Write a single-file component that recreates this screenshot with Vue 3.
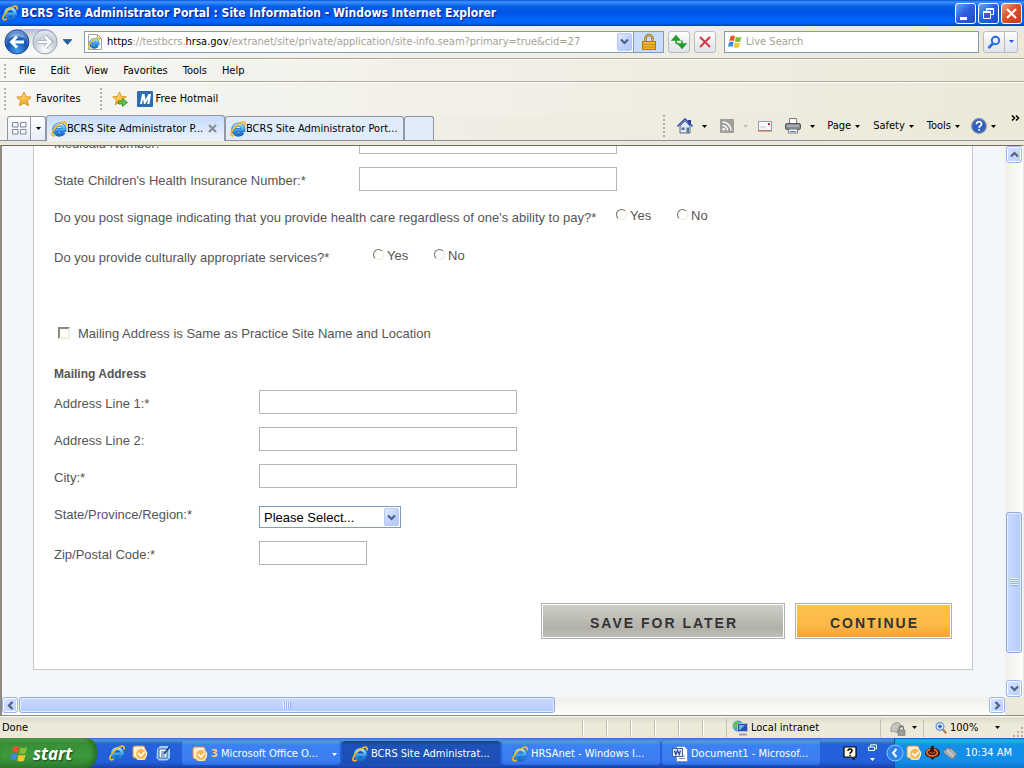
<template>
  <div class="desktop">
    <!-- shared icons -->
    <svg class="defs" width="0" height="0" aria-hidden="true">
      <defs>
        <linearGradient id="ieBlue" x1="0" y1="0" x2="0" y2="1">
          <stop offset="0" stop-color="#a4e2ff" />
          <stop offset="0.5" stop-color="#3fa4ee" />
          <stop offset="1" stop-color="#1a6fd0" />
        </linearGradient>
        <linearGradient id="gold" x1="0" y1="0" x2="0" y2="1">
          <stop offset="0" stop-color="#ffe98a" />
          <stop offset="1" stop-color="#f0a010" />
        </linearGradient>
        <radialGradient id="ballBlue" cx="0.5" cy="0.85" r="0.8">
          <stop offset="0" stop-color="#3fa0f0" />
          <stop offset="0.55" stop-color="#1552b0" />
          <stop offset="1" stop-color="#6f9bd6" />
        </radialGradient>
        <radialGradient id="ballGray" cx="0.5" cy="0.8" r="0.8">
          <stop offset="0" stop-color="#ffffff" />
          <stop offset="0.6" stop-color="#c4ccd8" />
          <stop offset="1" stop-color="#e8ecf2" />
        </radialGradient>
      </defs>
      <symbol id="ie" viewBox="0 0 16 16">
        <path d="M12.6 11.200A5 5 0 1 1 13.300 8.900H5" fill="none" stroke="#1560b8" stroke-width="4" />
        <path d="M12.6 11.200A5 5 0 1 1 13.300 8.900H5" fill="none" stroke="url(#ieBlue)" stroke-width="3" />
        <path d="M15 4c.8-2.800-1.400-3.600-4.500-2C7 3.500 2.600 8 1.300 11.500.3 14.300 1.600 15.600 4.200 14.300" fill="none" stroke="#f3b922" stroke-width="1.700" stroke-linecap="round" />
      </symbol>
      <symbol id="flag" viewBox="0 0 18 18">
        <path d="M4 2.500c2-1.200 3.600-.9 5 0L7.800 8C6.300 7 4.700 7 2.600 8z" fill="#e8552a" />
        <path d="M10 3c2 .9 3.800.9 6.200 0L15 8.400c-2.200 1-4 .9-6 0z" fill="#82bf35" />
        <path d="M2.300 9.200c2-1.100 3.700-.9 5.200 0l-1.300 5.400c-1.500-1-3.200-1-5.200 0z" fill="#4189e0" />
        <path d="M8.600 9.600c2 .9 3.800.9 6.200 0L13.500 15c-2.300 1-4 .9-6.100 0z" fill="#f8c62a" />
      </symbol>
      <symbol id="star" viewBox="0 0 16 16">
        <path d="M8 1l2.100 4.700 5.100.5-3.900 3.400 1.200 5L8 12l-4.500 2.600 1.200-5L.8 6.200l5.100-.5z" fill="url(#gold)" stroke="#d98a10" stroke-width="0.900" stroke-linejoin="round" />
      </symbol>
      <symbol id="outlook" viewBox="0 0 16 16">
        <rect x="1" y="1" width="12" height="12" rx="2" fill="#fff3dc" stroke="#e08a3c" />
        <path d="M5 4h8l2.500 4-2.500 7H5L2.500 9z" fill="#f6c368" />
        <circle cx="9" cy="9" r="5.500" fill="#f3b650" stroke="#fff4dd" stroke-width="1.200" />
        <path d="M6 8l3 3 3.500-4" fill="none" stroke="#fff" stroke-width="1.600" />
      </symbol>
      <symbol id="chev" viewBox="0 0 9 9">
        <path d="M1 2.500l3.500 3.500L8 2.500" fill="none" stroke="#4d6185" stroke-width="2.200" />
      </symbol>
      <symbol id="tri" viewBox="0 0 5 3">
        <path d="M0 0h5L2.500 3z" fill="currentColor" />
      </symbol>
    </svg>

    <header class="title-bar">
      <svg class="i16"><use href="#ie" /></svg>
      <h1>BCRS Site Administrator Portal : Site Information - Windows Internet Explorer</h1>
      <button class="win-btn" aria-label="Minimize">
        <svg viewBox="0 0 19 19"><path d="M4 13h7v3H4z" fill="#fff" /></svg>
      </button>
      <button class="win-btn" aria-label="Restore">
        <svg viewBox="0 0 19 19"><path d="M7.500 7V4.500h7v6H12M4.500 8h7v6.500h-7z" fill="none" stroke="#fff" /><path d="M7 4h8v2H7zM4 7h8v2H4z" fill="#fff" /></svg>
      </button>
      <button class="win-btn close" aria-label="Close">
        <svg viewBox="0 0 19 19"><path d="M5 5l9 9M14 5l-9 9" stroke="#fff" stroke-width="2.200" /></svg>
      </button>
    </header>

    <div class="address-row">
      <div class="nav-pill">
        <button aria-label="Back">
          <svg viewBox="0 0 26 26"><circle cx="13" cy="13" r="12" fill="url(#ballBlue)" stroke="#2c4f86" /><path d="M5 9c2-6 14-6 16 0-4-2-12-2-16 0z" fill="#fff" opacity="0.350" /><path d="M20 13H8M13 7.500L7.500 13l5.500 5.500" fill="none" stroke="#fff" stroke-width="3" /></svg>
        </button>
        <button aria-label="Forward">
          <svg viewBox="0 0 26 26"><circle cx="13" cy="13" r="12" fill="url(#ballGray)" stroke="#98a2b4" /><path d="M6 13h12M13 7.500l5.500 5.500-5.500 5.500" fill="none" stroke="#8f9bb0" stroke-width="4" /><path d="M6 13h12M13 7.500l5.500 5.500-5.500 5.500" fill="none" stroke="#fff" stroke-width="2.600" /></svg>
        </button>
      </div>
      <button class="plain recent" aria-label="Recent pages"><svg viewBox="0 0 9 6"><path d="M0 .5h9L4.500 5.500z" fill="#2a62a8" stroke="#173f78" stroke-width="0.600" /></svg></button>
      <div class="url-box">
        <svg class="i16" viewBox="0 0 16 16"><path d="M1.500.5h9l4 4v11h-13z" fill="#fdfdfb" stroke="#a8a698" /><path d="M10.500.5v4h4" fill="none" stroke="#a8a698" /><use href="#ie" x="1" y="3" width="12" height="12" /></svg>
        <div class="url" role="textbox" aria-label="Address"><b>https</b>://testbcrs.<b>hrsa.gov</b>/extranet/site/private/application/site-info.seam?primary=true&amp;cid=27</div>
        <button class="xp-arrow" aria-label="Show addresses"><svg><use href="#chev" /></svg></button>
        <button class="lock" aria-label="Security report">
          <svg viewBox="0 0 14 16"><path d="M3.500 8V4.500a3.500 3.500 0 017 0V8" fill="none" stroke="#8a6d1a" stroke-width="2.400" /><path d="M3.500 8V4.500a3.500 3.500 0 017 0V8" fill="none" stroke="#dcbc54" /><rect x="0.500" y="7.500" width="13" height="8" fill="#efb52c" stroke="#b07a10" /><path d="M1 10.500h12M1 13h12" stroke="#c98d16" /></svg>
        </button>
      </div>
      <button class="tool-btn" aria-label="Refresh">
        <svg viewBox="0 0 16 16"><path d="M5 9.500V4M1.500 6L5 2l3.500 4z" fill="#249a2a" stroke="#249a2a" stroke-width="1.500" /><path d="M5 9.500h2.500M11 6.500V12M7.500 10l3.500 4 3.500-4z" fill="#249a2a" stroke="#249a2a" stroke-width="1.500" /></svg>
      </button>
      <button class="tool-btn" aria-label="Stop">
        <svg viewBox="0 0 16 16"><path d="M3 3l10 10M13 3L3 13" stroke="#cc3a42" stroke-width="2" /></svg>
      </button>
      <div class="search-box">
        <svg class="i16"><use href="#flag" /></svg>
        <input type="text" placeholder="Live Search" aria-label="Live Search" />
      </div>
      <div class="go">
        <button aria-label="Search"><svg viewBox="0 0 14 14"><circle cx="8.500" cy="5.500" r="3.700" fill="#e6f1ff" stroke="#2a6ae0" stroke-width="2" /><path d="M6 8.500L1.500 13" stroke="#2a6ae0" stroke-width="2.600" /></svg></button>
        <button class="narrow" aria-label="Search options"><svg class="tri"><use href="#tri" /></svg></button>
      </div>
    </div>

    <nav class="menu-row">
      <i class="grip"></i>
      <button v-for="m in menus" :key="m" class="plain">{{ m }}</button>
    </nav>

    <div class="fav-row">
      <i class="grip"></i>
      <button class="plain fav"><svg class="i16"><use href="#star" /></svg>Favorites</button>
      <i class="grip"></i>
      <button class="plain add" aria-label="Add to Favorites Bar">
        <svg class="i16" viewBox="0 0 16 16"><use href="#star" width="15" height="15" /><path d="M6.500 10h4V7.500L15.500 11.500l-5 4V13h-4z" fill="#5cc846" stroke="#23852a" stroke-width="0.800" /></svg>
      </button>
      <a href="#" class="hotmail">
        <svg class="i16" viewBox="0 0 16 16"><rect width="16" height="16" rx="1" fill="#2c6cb4" /><path d="M3 13l2-10h2.500l1 5.500L11.500 3H14l-1.500 10h-2.300l.8-5-2.800 5H7L6 8l-.9 5z" fill="#fff" /></svg>
        Free Hotmail
      </a>
    </div>

    <div class="tab-row">
      <div class="quick-tabs">
        <button aria-label="Quick Tabs"><svg viewBox="0 0 15 13"><path d="M.5.500h5.500v4.500H.5zM8.500.5H14v4.500H8.500zM.5 7.500H6V12H.5zM8.500 7.500H14V12H8.500z" fill="#f4f7fb" stroke="#7d8796" /></svg></button>
        <button class="narrow" aria-label="Tab list"><svg class="tri"><use href="#tri" /></svg></button>
      </div>
      <div class="tab active">
        <svg class="i16"><use href="#ie" /></svg>
        <span>BCRS Site Administrator P...</span>
        <button class="plain tab-close" aria-label="Close tab"><svg viewBox="0 0 9 9"><path d="M1 1l7 7M8 1L1 8" stroke="#8c8f96" stroke-width="2.200" /></svg></button>
      </div>
      <div class="tab">
        <svg class="i16"><use href="#ie" /></svg>
        <span>BCRS Site Administrator Port...</span>
      </div>
      <button class="tab new" aria-label="New tab"></button>
      <div class="commands">
        <i class="grip"></i>
        <button class="plain home" aria-label="Home">
          <svg class="i16" viewBox="0 0 16 16"><path d="M11 2h3v5h-3z" fill="#2a3f9c" /><path d="M3 8l5-5 5 5v7H3z" fill="#dce6f6" stroke="#5a6c94" /><path d="M.5 8.500L8 1l7.500 7.500" fill="none" stroke="#334fa8" stroke-width="1.600" /><path d="M4.500 9.500h3v2.500h-3zM9.500 9.500H12V15H9.500z" fill="#5b7398" /></svg>
          <svg class="tri"><use href="#tri" /></svg>
        </button>
        <button class="plain feed" aria-label="Feeds">
          <svg class="i14" viewBox="0 0 14 14"><rect width="14" height="14" rx="1" fill="#a09f9a" /><circle cx="3.800" cy="10.300" r="1.300" fill="#fff" /><path d="M2.500 6.500a5 5 0 015 5M2.500 3a8.500 8.500 0 018.500 8.500" fill="none" stroke="#fff" stroke-width="1.500" /></svg>
          <svg class="tri dim"><use href="#tri" /></svg>
        </button>
        <button class="plain mail" aria-label="Read mail">
          <svg class="i14" viewBox="0 0 14 14"><rect x="0.500" y="2.500" width="13" height="9" fill="#f6f6f8" stroke="#9a9cae" /><path d="M10 4h2v2h-2z" fill="#d33" /><path d="M2.500 8h5" stroke="#c0c2d0" /><path d="M0 12h14" stroke="#c65a5a" /></svg>
        </button>
        <button class="plain print" aria-label="Print">
          <svg class="i16" viewBox="0 0 16 16"><path d="M4.500.5h7V6h-7z" fill="#fff" stroke="#7a7d84" /><rect x="0.500" y="5.500" width="15" height="6" rx="1.500" fill="#898c94" stroke="#55585f" /><path d="M2 8h12" stroke="#c9ccd2" /><path d="M4 11h8l.8 4H3.200z" fill="#fff" stroke="#7a7d84" /><path d="M5 13.500h6" stroke="#4a86d8" /></svg>
          <svg class="tri"><use href="#tri" /></svg>
        </button>
        <button v-for="c in ['Page', 'Safety', 'Tools']" :key="c" class="plain cmd">{{ c }}<svg class="tri"><use href="#tri" /></svg></button>
        <button class="plain help" aria-label="Help">
          <svg class="i16" viewBox="0 0 16 16"><circle cx="8" cy="8" r="7.300" fill="#2f5fc0" stroke="#7d8ca8" stroke-width="1.300" /><path d="M5.500 6.200c0-3.600 5.200-3.200 5 0-.1 1.800-2.400 1.700-2.400 3.600M8.100 11v1.800" fill="none" stroke="#fff" stroke-width="1.800" /></svg>
          <svg class="tri"><use href="#tri" /></svg>
        </button>
        <button class="plain more" aria-label="More commands">
          <svg viewBox="0 0 9 6"><path d="M1 .5l2.500 2.500L1 5.500M5 .5l2.500 2.500L5 5.500" fill="none" stroke="#000" stroke-width="1.500" /></svg>
        </button>
      </div>
    </div>

    <div class="viewport">
      <div class="page">
        <form class="sheet" @submit.prevent>
          <div v-for="f in numbers" :key="f.id" class="row wide">
            <label :for="f.id">{{ f.label }}</label>
            <input :id="f.id" v-model="form[f.id]" type="text" class="box" />
          </div>

          <fieldset class="question signage">
            <legend>Do you post signage indicating that you provide health care regardless of one's ability to pay?*</legend>
            <label><input v-model="form.signage" type="radio" name="signage" value="yes" />Yes</label>
            <label><input v-model="form.signage" type="radio" name="signage" value="no" />No</label>
          </fieldset>
          <fieldset class="question culture">
            <legend>Do you provide culturally appropriate services?*</legend>
            <label><input v-model="form.culture" type="radio" name="culture" value="yes" />Yes</label>
            <label><input v-model="form.culture" type="radio" name="culture" value="no" />No</label>
          </fieldset>

          <label class="same"><input v-model="form.same" type="checkbox" />Mailing Address is Same as Practice Site Name and Location</label>

          <h2>Mailing Address</h2>
          <div v-for="f in address" :key="f.id" class="row">
            <label :for="f.id">{{ f.label }}</label>
            <input :id="f.id" v-model="form[f.id]" type="text" class="box" />
          </div>
          <div class="row state">
            <label for="state">State/Province/Region:*</label>
            <div class="select">
              <select id="state" v-model="form.state">
                <option value="">Please Select...</option>
              </select>
              <span class="xp-arrow"><svg><use href="#chev" /></svg></span>
            </div>
          </div>
          <div class="row">
            <label for="zip">Zip/Postal Code:*</label>
            <input id="zip" v-model="form.zip" type="text" class="box short" />
          </div>

          <div class="actions">
            <button type="button" class="save">SAVE FOR LATER</button>
            <button type="submit" class="continue">CONTINUE</button>
          </div>
        </form>
      </div>
      <div class="vbar">
        <button class="sb up" aria-label="Scroll up"><svg><use href="#chev" /></svg></button>
        <div class="vthumb-gap"></div>
        <div class="vthumb"><i></i></div>
        <div class="vthumb-rest"></div>
        <button class="sb" aria-label="Scroll down"><svg><use href="#chev" /></svg></button>
      </div>
      <div class="hbar">
        <button class="sb left" aria-label="Scroll left"><svg><use href="#chev" /></svg></button>
        <div class="hthumb"><i></i></div>
        <div class="hthumb-rest"></div>
        <button class="sb right" aria-label="Scroll right"><svg><use href="#chev" /></svg></button>
      </div>
      <div class="corner"></div>
    </div>

    <div class="status-bar">
      <span class="done">Done</span>
      <i v-for="n in 6" :key="n" class="pane"></i>
      <span class="zone">
        <svg viewBox="0 0 17 16"><circle cx="6" cy="6" r="5.500" fill="#38a8d8" /><path d="M2 3c2-2 4-2 5 0s-2 4-4 5S0 6 2 3z" fill="#6ac24a" /><rect x="5.500" y="3.500" width="10" height="8" rx="1" fill="#2450b8" stroke="#b8bcc8" /><path d="M7 5h6l-5 5H7z" fill="#6fa8ee" /><path d="M7 13.500h8v2H7z" fill="#98a0b0" /></svg>
        Local intranet
      </span>
      <button class="plain privacy" aria-label="Protected mode">
        <svg class="i16" viewBox="0 0 16 16"><path d="M1 8c1-5 7-7 9-4l2 3-4 1-1 5-3-2-3 1z" fill="#c5c5c0" stroke="#8a8a86" stroke-width="0.800" /><path d="M9.500 10V8a2 2 0 014 0v2" fill="none" stroke="#777" stroke-width="1.300" /><rect x="8" y="10" width="7" height="5.500" fill="#9b9b98" stroke="#777" stroke-width="0.600" /></svg>
        <svg class="tri"><use href="#tri" /></svg>
      </button>
      <button class="plain zoom">
        <svg viewBox="0 0 12 12"><circle cx="5" cy="4.500" r="3.900" fill="#e4f1ff" stroke="#5c94e0" stroke-width="1.200" /><path d="M3 4.500h4M5 2.500v4" stroke="#1d4fb0" stroke-width="1.300" /><path d="M8 7.500l3.300 3.800" stroke="#b9773a" stroke-width="2" /></svg>
        <span>100%</span>
        <svg class="tri"><use href="#tri" /></svg>
      </button>
      <svg class="sizer" viewBox="0 0 11 11"><path d="M8 0h2v2H8zM8 4h2v2H8zM4 4h2v2H4zM8 8h2v2H8zM4 8h2v2H4zM0 8h2v2H0z" fill="#b5b19c" /></svg>
    </div>

    <footer class="taskbar">
      <button class="start"><svg><use href="#flag" /></svg>start</button>
      <div class="quick">
        <button class="plain" aria-label="Internet Explorer"><svg class="i16"><use href="#ie" /></svg></button>
        <button class="plain" aria-label="Outlook"><svg class="i16"><use href="#outlook" /></svg></button>
        <button class="plain" aria-label="Show Desktop"><svg class="i16" viewBox="0 0 16 16"><path d="M2 4l3-3h8l2 3v9l-3 2.500H4L1.500 13z" fill="#9fd0f6" /><rect x="4" y="4" width="8" height="9" fill="#fff" stroke="#2b5ea8" /><path d="M6 7h4M6 9h3M6 11h4" stroke="#2b5ea8" /><path d="M9 9l5.500-7" stroke="#133c7e" stroke-width="1.600" /></svg></button>
      </div>
      <div class="tasks">
        <button v-for="t in tasks" :key="t.text" class="task" :class="{ pressed: t.pressed }">
          <svg v-if="t.icon === 'word'" class="i16" viewBox="0 0 16 16"><path d="M4.500.5h8l3 3v12h-11z" fill="#fff" stroke="#7c8fb8" /><path d="M7 10h6M7 12.500h6" stroke="#6f8fd0" /><rect x="0.500" y="2.500" width="10" height="8" fill="#e8f0ff" stroke="#3d5fa8" /><path d="M2.500 4.500l1.300 4 1.700-4 1.700 4 1.300-4" fill="none" stroke="#234a9c" stroke-width="1.300" /></svg>
          <svg v-else class="i16"><use :href="'#' + t.icon" /></svg>
          <b v-if="t.count">{{ t.count }}</b>
          <span>{{ t.text }}</span>
          <svg v-if="t.count" class="tri"><use href="#tri" /></svg>
        </button>
      </div>
      <div class="lang">
        <svg class="i14" viewBox="0 0 14 14"><path d="M1 1h12v10h-2v2.500L8.500 11H1z" fill="#fffde0" stroke="#000" stroke-width="1.200" /><path d="M5 5c0-3 4.300-2.500 4 0-.1 1.200-2 1.300-2 2.800M7 8.700v1.300" fill="none" stroke="#000" stroke-width="1.500" /></svg>
        <svg class="restore" viewBox="0 0 9 18"><path d="M2.500 2.500V.8h6v4H7M.5 3h6v3.500h-6z" fill="none" stroke="#fff" /><path d="M2 14h5l-2.500 3z" fill="#fff" /></svg>
      </div>
      <div class="tray">
        <button class="plain hide" aria-label="Show hidden icons"><svg viewBox="0 0 18 18"><circle cx="9" cy="9" r="8" fill="#2b84e6" stroke="#8cc6fa" /><path d="M10.500 5L7 9l3.500 4" fill="none" stroke="#fff" stroke-width="2" /></svg></button>
        <svg class="i16"><use href="#outlook" /></svg>
        <svg class="i16" viewBox="0 0 16 16"><path d="M1 8a7 5 0 016-5V1h3v2a6 5 0 016 5 6 5 0 01-5 4.500L8.500 15 6 12.500A6 5 0 011 8z" fill="#3a1c0c" /><path d="M6 4.500C3 5 2.200 7 3.500 9s3 2 4.500 2 4-.5 5-2-.5-4-3-4.500" fill="none" stroke="#e8692c" stroke-width="1.800" /><path d="M5.500 7l3 1.500L11 7" fill="none" stroke="#e8692c" /></svg>
        <svg class="i16" viewBox="0 0 16 16"><path d="M1 6l3-1 1-3 2 2 2-1 6 6-4 5-3-1-6-5z" fill="#a9acb0" stroke="#6d7075" stroke-width="0.800" /><path d="M5 5l6 6" stroke="#d0d2d6" stroke-width="1.300" /></svg>
        <time>10:34 AM</time>
      </div>
    </footer>
  </div>
</template>

<script setup>
import { reactive } from 'vue';

const menus = ['File', 'Edit', 'View', 'Favorites', 'Tools', 'Help'];

const numbers = [
  { id: 'medicaid', label: 'Medicaid Number:' },
  { id: 'schip', label: "State Children's Health Insurance Number:*" },
];

const address = [
  { id: 'line1', label: 'Address Line 1:*' },
  { id: 'line2', label: 'Address Line 2:' },
  { id: 'city', label: 'City:*' },
];

const tasks = [
  { icon: 'outlook', count: 3, text: 'Microsoft Office O...' },
  { icon: 'ie', text: 'BCRS Site Administrat...', pressed: true },
  { icon: 'ie', text: 'HRSAnet - Windows I...' },
  { icon: 'word', text: 'Document1 - Microsof...' },
];

const form = reactive({
  medicaid: '',
  schip: '',
  signage: null,
  culture: null,
  same: false,
  line1: '',
  line2: '',
  city: '',
  state: '',
  zip: '',
});
</script>

<style>
html,
body {
  margin: 0;
  overflow: hidden;
}
</style>

<style scoped>
* {
  box-sizing: border-box;
}
.desktop {
  display: flex;
  flex-direction: column;
  height: 100vh;
  background: #ece9d8;
  color: #000;
  font: 11px/14px Tahoma, 'DejaVu Sans Condensed', sans-serif;
}
.defs {
  position: absolute;
}
svg {
  display: block;
  flex: none;
}
button {
  font: inherit;
  color: inherit;
  padding: 0;
}
.i16 {
  width: 16px;
  height: 16px;
}
.i14 {
  width: 14px;
  height: 14px;
}
.tri {
  width: 5px;
  height: 3px;
}
.plain {
  display: flex;
  align-items: center;
  border: 0;
  background: none;
  white-space: nowrap;
}
.grip {
  width: 2px;
  height: 18px;
  background: repeating-linear-gradient(#b5b2a4 0 2px, transparent 2px 4px);
}

/* title bar */
.title-bar {
  display: flex;
  align-items: center;
  gap: 2px;
  flex: none;
  height: 26px;
  padding: 0 2px;
  background: linear-gradient(#0a52d8 0, #3d95ff 2px, #0860ea 6px, #0054e3 12px, #0066ff 20px, #0061f5 23px, #003dbb 26px);
  color: #fff;
}
.title-bar h1 {
  flex: 1;
  min-width: 0;
  margin: 0 0 0 1px;
  overflow: hidden;
  white-space: nowrap;
  font: bold 12px/18px 'Trebuchet MS', 'DejaVu Sans Condensed', sans-serif;
  text-shadow: 1px 1px 1px #0a1883;
}
.win-btn {
  width: 21px;
  height: 21px;
  border: 1px solid #fff;
  border-radius: 3px;
  background: linear-gradient(135deg, #7ba0f0, #2f62dc 45%, #1c48c4);
}
.win-btn.close {
  background: linear-gradient(135deg, #f0a088, #dd4f2a 45%, #c23a12);
}

/* address row */
.address-row {
  display: flex;
  align-items: center;
  flex: none;
  height: 33px;
  padding: 0 6px 1px 4px;
  border-bottom: 1px solid #aca899;
  background: linear-gradient(90deg, #f6f6f4, #ece9d8);
}
.nav-pill {
  display: flex;
  gap: 2px;
  border-radius: 14px;
  background: linear-gradient(#b9bcc2, #e6e8ea 40%, #fff);
}
.nav-pill button {
  width: 26px;
  height: 26px;
  border: 0;
  background: none;
}
.recent {
  margin: 0 12px 0 5px;
}
.recent svg {
  width: 9px;
  height: 6px;
}
.url-box {
  display: flex;
  align-items: center;
  flex: 1;
  min-width: 0;
  height: 22px;
  padding-left: 2px;
  border: 1px solid #7f9db9;
  background: #fff;
}
.url {
  flex: 1;
  min-width: 0;
  margin-left: 4px;
  overflow: hidden;
  white-space: nowrap;
  color: #a5a192;
}
.url b {
  font-weight: normal;
  color: #000;
}
.xp-arrow {
  display: flex;
  align-items: center;
  justify-content: center;
  width: 15px;
  height: 18px;
  border: 1px solid #b6c9f5;
  border-radius: 2px;
  background: linear-gradient(135deg, #e1eafe, #c3d3fd 50%, #aec8f7);
}
.xp-arrow svg {
  width: 9px;
  height: 9px;
}
.lock {
  display: flex;
  align-items: center;
  justify-content: center;
  width: 30px;
  height: 20px;
  margin-left: 1px;
  border: 0;
  border-left: 1px solid #7f9db9;
  background: #c9dcfb;
}
.lock svg {
  width: 14px;
  height: 16px;
}
.tool-btn {
  display: flex;
  align-items: center;
  justify-content: center;
  width: 22px;
  height: 22px;
  margin-left: 4px;
  border: 1px solid #b9bcc6;
  border-radius: 3px;
  background: linear-gradient(#fff, #eeeef0 50%, #dfe3ea);
}
.tool-btn svg {
  width: 16px;
  height: 16px;
}
.search-box {
  display: flex;
  align-items: center;
  flex: 0 0 255px;
  height: 22px;
  margin-left: 8px;
  padding-left: 2px;
  border: 1px solid #7f9db9;
  background: #fff;
}
.search-box input {
  flex: 1;
  min-width: 0;
  margin-left: 3px;
  padding: 0;
  border: 0;
  outline: 0;
  background: none;
  font: inherit;
}
.search-box input::placeholder {
  color: #a5a192;
  opacity: 1;
}
.go {
  display: flex;
  width: 35px;
  height: 22px;
  margin-left: 4px;
  border: 1px solid #b9bcc6;
  border-radius: 3px;
  background: linear-gradient(#fff, #eeeef0 50%, #dfe3ea);
}
.go button {
  display: flex;
  align-items: center;
  justify-content: center;
  flex: 1;
  border: 0;
  background: none;
  color: #1d5ad8;
}
.go button svg:not(.tri) {
  width: 14px;
  height: 14px;
}
.go .narrow {
  flex: none;
  width: 13px;
  border-left: 1px solid #b9bcc6;
}

/* menu and favorites */
.menu-row {
  display: flex;
  align-items: center;
  gap: 15px;
  flex: none;
  height: 23px;
  padding-left: 4px;
  border-top: 1px solid #fff;
  border-bottom: 1px solid #aca899;
  background: linear-gradient(90deg, #f6f6f4, #ece9d8);
}
.menu-row .grip {
  height: 14px;
  margin-right: -2px;
}
.fav-row {
  display: flex;
  align-items: center;
  flex: none;
  height: 33px;
  padding-left: 4px;
  border-top: 1px solid #fff;
  background: linear-gradient(90deg, #f6f6f4, #ece9d8);
}
.fav-row .grip {
  height: 22px;
}
.fav {
  gap: 4px;
  margin: 0 19px 0 10px;
}
.add {
  margin: 0 9px 0 10px;
}
.hotmail {
  display: flex;
  align-items: center;
  gap: 3px;
  color: #000;
  text-decoration: none;
}

/* tabs */
.tab-row {
  display: flex;
  align-items: flex-end;
  flex: none;
  height: 26px;
  padding-left: 7px;
  border-bottom: 1px solid #8a8fae;
  background: linear-gradient(90deg, #f3f2ee, #ece9d8);
}
.quick-tabs {
  display: flex;
  width: 39px;
  height: 24px;
  border: 1px solid #9497a8;
  border-bottom: 0;
  border-radius: 3px 3px 0 0;
  background: linear-gradient(#fff, #e6edf6);
}
.quick-tabs button {
  display: flex;
  align-items: center;
  justify-content: center;
  flex: 1;
  border: 0;
  background: none;
}
.quick-tabs button svg:not(.tri) {
  width: 15px;
  height: 13px;
}
.quick-tabs .narrow {
  flex: none;
  width: 15px;
  border-left: 1px solid #9497a8;
}
.tab {
  display: flex;
  align-items: center;
  width: 179px;
  height: 24px;
  padding-left: 4px;
  border: 1px solid #9497a8;
  border-bottom: 0;
  border-radius: 3px 3px 0 0;
  background: #e0ecf8;
  white-space: nowrap;
}
.tab.active {
  height: 26px;
  margin-bottom: -1px;
  background: linear-gradient(#c4dcfa, #eef3fb);
}
.tab.new {
  width: 30px;
}
.tab-close {
  margin: 0 7px 0 auto;
}
.tab-close svg {
  width: 9px;
  height: 9px;
}
.commands {
  display: flex;
  align-items: center;
  height: 26px;
  margin-left: auto;
  padding: 0 4px 2px 0;
}
.commands .grip {
  margin-right: 12px;
  height: 22px;
}
.commands .tri {
  margin-left: 9px;
}
.dim {
  color: #c2bfb2;
}
.home,
.mail {
  margin-right: 13px;
}
.feed {
  margin-right: 10px;
}
.print {
  margin-right: 12px;
}
.cmd {
  margin-right: 13px;
}
.help {
  margin-left: -2px;
}
.commands .cmd .tri,
.commands .help .tri {
  margin-left: 4px;
}
.more {
  align-self: flex-start;
  margin: 1px 0 0 15px;
}
.more svg {
  width: 9px;
  height: 6px;
}

/* page area */
.viewport {
  display: grid;
  grid-template: minmax(0, 1fr) 18px / minmax(0, 1fr) 18px;
  flex: 1;
  min-height: 0;
  margin-top: 4px;
  border-top: 1px solid #716f64;
  border-left: 2px solid #8e8b80;
  border-right: 1px solid #ece9d8;
}
.page {
  overflow: hidden;
  padding: 0 32px 0 31px;
  background: #f3f7fb;
  font: 13px/16px 'Liberation Sans', Arial, sans-serif;
  color: #555;
}
.sheet {
  margin-top: -16px;
  padding: 0 20px 30px;
  border: 1px solid #c6c6c6;
  border-top: 0;
  background: #fff;
}
.row {
  display: grid;
  grid-template-columns: 205px 1fr;
  align-items: center;
  min-height: 24px;
  margin-bottom: 13px;
}
.row.wide {
  grid-template-columns: 305px 1fr;
}
.row label {
  padding-top: 3px;
}
.box {
  width: 258px;
  height: 24px;
  padding: 2px 4px;
  border: 1px solid #b5b5b5;
  background: #fff;
  font: inherit;
}
.box.short {
  width: 108px;
}
.question {
  display: flex;
  align-items: center;
  min-width: 0;
  height: 24px;
  margin: 0 0 16px;
  padding: 0;
  border: 0;
}
.question legend {
  float: left;
  padding: 3px 0 0;
}
.question label {
  display: flex;
  align-items: center;
  gap: 3px;
  width: 61px;
}
.signage legend {
  width: 562px;
}
.culture legend {
  width: 319px;
}
.question input {
  appearance: none;
  width: 11px;
  height: 11px;
  margin: 0 0 3px;
  border: 1px solid;
  border-color: #716f64 #ece9d8 #ece9d8 #716f64;
  border-radius: 50%;
}
.question input:checked {
  background: radial-gradient(#000 0 2px, #fff 3px);
}
.same {
  display: flex;
  align-items: center;
  gap: 8px;
  width: max-content;
  height: 24px;
  margin: 54px 0 19px 4px;
}
.same input {
  appearance: none;
  width: 12px;
  height: 12px;
  margin: 0 0 3px;
  border: 2px solid;
  border-color: #8a877a #f1efe2 #f1efe2 #8a877a;
}
.same input:checked {
  background: #000;
}
h2 {
  margin: 0 0 6px;
  font: bold 12px/19px 'Liberation Sans', Arial, sans-serif;
}
.state {
  align-items: start;
  min-height: 40px;
  margin-bottom: 0;
}
.state label {
  padding-top: 6px;
}
.select {
  display: flex;
  align-items: center;
  width: 142px;
  height: 22px;
  margin-top: 5px;
  padding-right: 1px;
  border: 1px solid #7f9db9;
  background: #fff;
}
.select select {
  appearance: none;
  flex: 1;
  min-width: 0;
  padding: 2px 4px 0;
  border: 0;
  background: none;
  font: inherit;
  color: #000;
}
.select .xp-arrow {
  pointer-events: none;
}
.actions {
  display: flex;
  justify-content: flex-end;
  gap: 10px;
  margin-top: 38px;
}
.actions button {
  width: 244px;
  height: 36px;
  padding: 4px 0 0 2px;
  border: 1px solid #b0b0b0;
  box-shadow: inset 0 0 0 1px #fff;
  background: linear-gradient(#cfcfc9, #b2b1aa 70%, #bfbeb8);
  font: bold 14px/16px 'Liberation Sans', Arial, sans-serif;
  letter-spacing: 2px;
  color: #333;
}
.actions .continue {
  width: 157px;
  background: linear-gradient(#ffc24a, #fdb94a 60%, #f79f33);
}

/* scrollbars */
.vbar {
  display: flex;
  flex-direction: column;
  padding: 0 1px;
  background: linear-gradient(90deg, #f0efe8, #fefefb);
}
.hbar {
  display: flex;
  padding-bottom: 2px;
  background: linear-gradient(#f0efe8, #fefefb);
}
.sb {
  display: flex;
  align-items: center;
  justify-content: center;
  flex: none;
  width: 16px;
  height: 17px;
  border: 1px solid #98b4ee;
  border-radius: 3px;
  box-shadow: inset 0 0 0 1px #fff;
  background: linear-gradient(135deg, #d8e4fe, #b9cdfb);
}
.hbar .sb {
  height: 16px;
}
.sb svg {
  width: 9px;
  height: 9px;
}
.up svg {
  transform: rotate(180deg);
}
.left svg {
  transform: rotate(90deg);
}
.right svg {
  transform: rotate(-90deg);
}
.vthumb-gap {
  flex: 350;
}
.vthumb,
.hthumb {
  display: flex;
  align-items: center;
  justify-content: center;
  border: 1px solid #8aaae8;
  border-radius: 3px;
  box-shadow: inset 0 0 0 1px #e6eeff;
}
.vthumb {
  flex: 140;
  background: linear-gradient(90deg, #cbdafd, #b5cbfb);
}
.vthumb i {
  width: 8px;
  height: 8px;
  background: repeating-linear-gradient(#eef4ff 0 1px, #8cb0f8 1px 2px);
}
.vthumb-rest {
  flex: 27;
}
.hthumb {
  flex: 536;
  margin-left: 1px;
  background: linear-gradient(#cbdafd, #b5cbfb);
}
.hthumb i {
  width: 8px;
  height: 7px;
  background: repeating-linear-gradient(90deg, #eef4ff 0 1px, #8cb0f8 1px 2px);
}
.hthumb-rest {
  flex: 435;
}
.corner {
  background: #ece9d8;
}

/* status bar */
.status-bar {
  display: flex;
  align-items: center;
  flex: none;
  height: 23px;
  padding-top: 1px;
  border-top: 1px solid #8e8b80;
  background: linear-gradient(#fff, #dedbc9 2px, #ece9d8 8px);
}
.done {
  flex: 1;
  padding-left: 2px;
}
.pane {
  width: 24px;
  height: 18px;
  border-left: 1px solid #c5c2b0;
  box-shadow: inset 1px 0 #fff;
}
.zone,
.privacy,
.zoom {
  display: flex;
  align-items: center;
  height: 18px;
  border-left: 1px solid #c5c2b0;
}
.zone {
  gap: 2px;
  width: 154px;
  padding-left: 5px;
}
.zone svg {
  width: 17px;
  height: 16px;
}
.privacy {
  gap: 6px;
  width: 43px;
  padding-left: 9px;
}
.zoom {
  width: 90px;
  padding-left: 11px;
}
.zoom svg:first-child {
  width: 12px;
  height: 12px;
}
.zoom span {
  margin: 0 auto 0 3px;
}
.zoom .tri {
  margin-right: 13px;
}
.sizer {
  align-self: flex-end;
  width: 11px;
  height: 11px;
}

/* taskbar */
.taskbar {
  display: flex;
  align-items: center;
  flex: none;
  height: 30px;
  background: linear-gradient(#3168d5, #4993e6 2px, #2561dc 6px, #245edb 24px, #1941a5);
  color: #fff;
}
.start {
  display: flex;
  align-items: center;
  gap: 4px;
  width: 97px;
  height: 30px;
  padding: 1px 0 0 9px;
  border: 0;
  border-radius: 0 12px 12px 0;
  background: linear-gradient(#5fac5b, #388e38 5px, #3c9a3c 18px, #2f7f2f);
  box-shadow: inset -3px 0 5px #256b25;
  font: italic bold 17px/24px 'Trebuchet MS', 'Open Sans', sans-serif;
  text-shadow: 1px 1px 2px #1c3c1c;
}
.start svg {
  width: 20px;
  height: 20px;
}
.quick {
  display: flex;
  gap: 7px;
  margin: 0 11px 0 12px;
}
.tasks {
  display: flex;
  gap: 2px;
  flex: 1;
  min-width: 0;
}
.task {
  display: flex;
  align-items: center;
  gap: 3px;
  flex: 0 1 158px;
  min-width: 0;
  height: 24px;
  padding: 2px 3px 0 10px;
  border: 0;
  border-radius: 3px;
  background: linear-gradient(#5a9bf8, #3c81f3 4px, #3a7df0 20px, #2f6be0);
  white-space: nowrap;
}
.task.pressed {
  background: linear-gradient(#163f99, #1e52b7 4px, #1b4fb5);
}
.task b {
  color: #ffce70;
}
.task .tri {
  margin-left: auto;
}
.lang {
  display: flex;
  align-items: center;
  gap: 11px;
  padding-right: 17px;
}
.restore {
  width: 9px;
  height: 18px;
}
.tray {
  display: flex;
  align-items: center;
  gap: 2px;
  height: 30px;
  padding-right: 12px;
  border-left: 1px solid #0b4f9e;
  background: linear-gradient(#0c59b9, #19b9f3 2px, #1290e9 7px, #1290e9 22px, #0f77cc);
}
.hide {
  margin-left: -9px;
}
.hide svg {
  width: 18px;
  height: 18px;
}
.tray time {
  margin-left: 5px;
}
</style>
